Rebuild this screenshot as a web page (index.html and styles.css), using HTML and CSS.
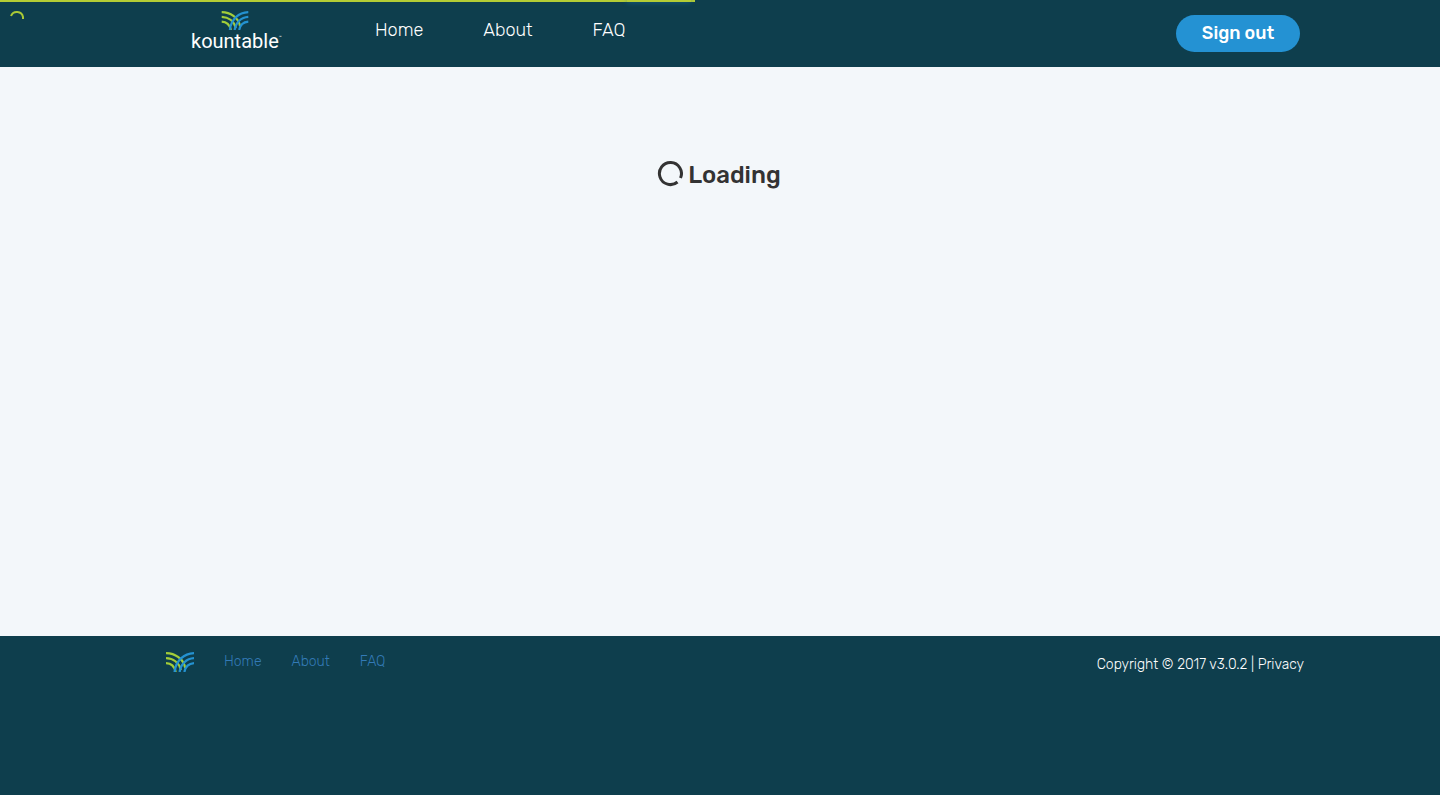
FILE: index.html
```html
<!DOCTYPE html>
<html lang="en">
<head>
<meta charset="utf-8">
<meta name="viewport" content="width=device-width, initial-scale=1">
<title>Kountable</title>
<link rel="stylesheet" href="styles.css">
</head>
<body>
<svg class="defs" aria-hidden="true">
  <symbol id="mark" viewBox="0 0 28 20">
    <g fill="none" stroke-width="2.300">
      <g stroke="#a3cd39">
        <path d="M0 1.200C9 1.400 17.500 6.500 19.300 16"/>
        <path d="M0 6.200C7 6.400 13 10.500 14.800 18"/>
        <path d="M0 11.200C5 11.400 8.500 14.500 9.700 20"/>
      </g>
      <g stroke="#2492d1">
        <path d="M28 1.200C18 1.600 9.800 8.500 8.600 20"/>
        <path d="M28 6.200C20.500 6.600 14.800 12 13.600 20"/>
        <path d="M28 11.200C23 11.600 19.300 15 18.400 20"/>
      </g>
    </g>
  </symbol>
</svg>
<div class="progress" role="progressbar" aria-label="Page loading"></div>
<svg class="corner-spinner" viewBox="0 0 14 14" aria-hidden="true"><path d="M1 6A6.200 6 0 0 1 13 7L13 9"/></svg>
<header class="header">
  <div class="header-inner">
    <a class="logo" href="#" aria-label="Kountable home">
      <svg class="logo-mark" aria-hidden="true"><use href="#mark"/></svg>
      <span class="wordmark">kountable<span class="tm">™</span></span>
    </a>
    <nav class="nav" aria-label="Main">
      <a href="#">Home</a>
      <a href="#">About</a>
      <a href="#">FAQ</a>
    </nav>
    <button class="sign-out" type="button">Sign out</button>
  </div>
</header>
<main class="main">
  <h1 class="loading">
    <svg class="spinner" viewBox="0 0 26 26" aria-hidden="true"><path d="M23.500 17A11 11 0 1 0 20.500 21"/></svg>
    Loading
  </h1>
</main>
<footer class="footer">
  <div class="footer-inner">
    <svg class="footer-mark" aria-hidden="true"><use href="#mark"/></svg>
    <nav class="footer-nav" aria-label="Footer">
      <a href="#">Home</a>
      <a href="#">About</a>
      <a href="#">FAQ</a>
    </nav>
    <p class="copyright">Copyright © 2017 v3.0.2 | <a href="#">Privacy</a></p>
  </div>
</footer>
</body>
</html>
```
FILE: styles.css
```css
* { box-sizing: border-box; }
body {
  margin: 0;
  min-height: 100vh;
  display: flex;
  flex-direction: column;
  background: #f3f7fa;
  color: #333;
  font-family: Rubik, Roboto, sans-serif;
  font-weight: 300;
}
a { color: inherit; text-decoration: none; }
.defs { position: absolute; width: 0; height: 0; }
.progress {
  position: absolute;
  top: 0;
  left: 0;
  width: 48.26%;
  height: 2px;
  background: #b4cc34;
}
.progress::after {
  content: "";
  position: absolute;
  right: 4px;
  top: 0;
  width: 64px;
  height: 2px;
  background: #b4cc34;
  box-shadow: 0 0 5px #1474a8;
}
.corner-spinner {
  position: absolute;
  top: 10px;
  left: 10px;
  width: 14px;
  height: 14px;
  fill: none;
  stroke: #a9c936;
  stroke-width: 2;
}
.header { background: #0e3e4d; color: #fff; }
.header-inner {
  display: flex;
  align-items: flex-start;
  max-width: 1160px;
  min-height: 67px;
  margin: 0 auto;
}
.logo {
  display: flex;
  flex-direction: column;
  width: 95px;
  margin-left: 51px;
  padding-top: 11px;
}
.logo-mark { width: 28px; height: 19px; margin-left: 30px; }
.wordmark {
  display: flex;
  align-items: flex-start;
  font: 400 20px/22px Roboto, sans-serif;
}
.tm { font-size: 5px; line-height: 14px; }
.nav {
  display: flex;
  gap: 60px;
  margin-left: 89px;
  padding-top: 19px;
  font-size: 18px;
  line-height: 22px;
}
.sign-out {
  width: 124px;
  height: 37px;
  margin: 15px 0 0 auto;
  padding: 0 0 1px;
  border: 0;
  border-radius: 19px;
  background: #2492d3;
  color: #fff;
  font: 500 18px/36px Rubik, Roboto, sans-serif;
}
.main { flex: 1; padding-top: 92px; }
.loading {
  display: flex;
  justify-content: center;
  align-items: center;
  gap: 5px;
  margin: 0;
  padding-right: 2px;
  font-size: 24px;
  line-height: 32px;
  font-weight: 500;
}
.spinner { width: 26px; height: 26px; margin-bottom: 2px; fill: none; stroke: #333; stroke-width: 3; }
.footer { min-height: 159px; background: #0e3e4d; color: #fff; }
.footer-inner {
  display: flex;
  align-items: flex-start;
  max-width: 1168px;
  margin: 0 auto;
  padding: 16px 0 0 30px;
  font-size: 14px;
  line-height: 20px;
}
.footer-mark { width: 28px; height: 20px; }
.footer-nav { display: flex; gap: 30px; margin-left: 30px; color: #337ab7; }
.copyright { margin: 3px 0 0 auto; }
```
